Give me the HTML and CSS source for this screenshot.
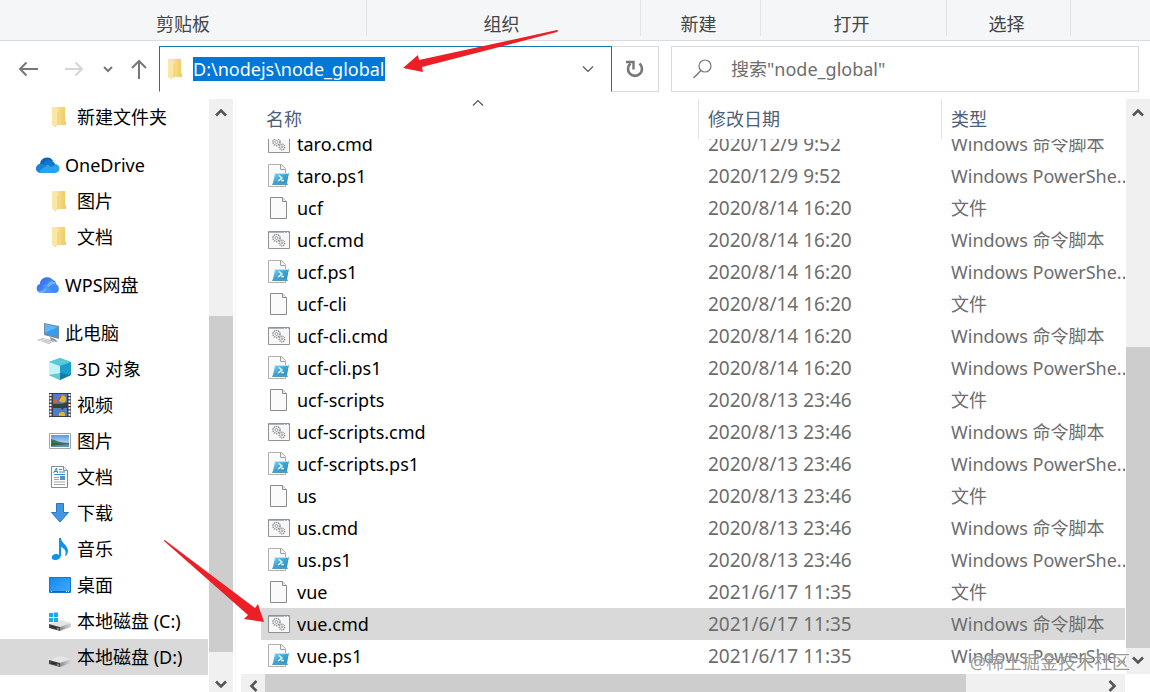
FILE: index.html
```html
<!DOCTYPE html>
<html lang="zh-CN">
<head>
<meta charset="utf-8">
<meta name="viewport" content="width=device-width, initial-scale=1">
<title>node_global</title>
<link rel="stylesheet" href="styles.css">
</head>
<body>
<svg class="defs" aria-hidden="true">
  <defs>
    <linearGradient id="g-folder"><stop offset="0" stop-color="#fbe49a"/><stop offset="1" stop-color="#eecb62"/></linearGradient>
    <linearGradient id="g-ps" x2="1" y2="1"><stop offset="0" stop-color="#8fdcf2"/><stop offset=".5" stop-color="#3aa6d4"/><stop offset="1" stop-color="#2b8fc4"/></linearGradient>
    <linearGradient id="g-desk" x2="1" y2="1"><stop offset="0" stop-color="#1488e8"/><stop offset="1" stop-color="#40acff"/></linearGradient>
    <linearGradient id="g-wps" x2="1" y2="1"><stop offset="0" stop-color="#2b62ee"/><stop offset="1" stop-color="#55a3fb"/></linearGradient>
    <linearGradient id="g-sky" x2="0" y2="1"><stop offset="0" stop-color="#5a9bdd"/><stop offset="1" stop-color="#e3f1fb"/></linearGradient>
    <linearGradient id="g-drive"><stop offset="0" stop-color="#888"/><stop offset=".5" stop-color="#b4b4b4"/><stop offset="1" stop-color="#d8d8d8"/></linearGradient>
    <symbol id="folder" viewBox="0 0 24 24"><path d="M7 2h10v14l1 1v3H7z" fill="url(#g-folder)"/><path d="M4 2h4l2 2v15l-3 3-3-2z" fill="#fae7a6"/><path d="M7 22l3-3V7" fill="none" stroke="#e3c266" stroke-width=".6"/></symbol>
    <symbol id="onedrive" viewBox="0 0 24 24"><path d="M4 11a7 7 0 0 1 13-3l-5 6-11 4a5 5 0 0 1 3-7z" fill="#0a64b8"/><path d="M4 11c4-1 8 3 12 4l-9 5H5a4.500 4.500 0 0 1-1-9z" fill="#1683d6"/><path d="M10 13c2-5 8-6 9-2 6 0 6 9 0 9H5l-2-2z" fill="#27a4ed"/><path d="M9 8c4-2 9 0 10 4l-4 2c-2-2-4-3-8-3z" fill="#0f77cd"/></symbol>
    <symbol id="wps" viewBox="0 0 24 24"><path d="M4 11c0-8 12-9 14-2l-4 11H5c-5 0-6-8-1-9z" fill="url(#g-wps)"/><path d="M10 12c2-3 3-5 6-5 3 0 4 2 4 4 4 2 4 9-1 9h-3z" fill="#3f8bf7"/><path d="M2 18c6 2 7-5 11-8 2-2 5-2 7 1-4-1-6 2-8 4-2 3-4 5-8 5z" fill="#74b2fd"/><path d="M9 11c3 1 5 7 9 9h-4c-3-2-4-5-7-7z" fill="#4d97fa"/></symbol>
    <symbol id="pc" viewBox="0 0 24 24"><path d="M8 2l15 3v13L8 14z" fill="#7d8996"/><path d="M9 3l13 3v10L9 13z" fill="#359bec"/><path d="M9 3l13 3-13 6z" fill="#5cb6f7"/><path d="M14 16l5 2 3 3-7-1z" fill="#9199a0"/><path d="M1 19l6-2 12 3-6 3z" fill="#b8bdc2"/><path d="M4 19l10 3M7 18l9 3M4 20l6-2" stroke="#fff" stroke-width=".5"/></symbol>
    <symbol id="cube" viewBox="0 0 24 24"><path d="M12 1l11 4v13l-11 5L1 18V5z" fill="#35b7ce"/><path d="M12 1L1 5l11 4 11-4z" fill="#55cbd9"/><path d="M1 5l11 4v8L1 18z" fill="#c4f3f5"/><path d="M23 5v13l-11-1V9z" fill="#1a9fca"/><path d="M1 18l11-2v7z" fill="#62cbd6"/><path d="M23 18l-11-2v7z" fill="#127d9e"/></symbol>
    <symbol id="video" viewBox="0 0 24 24"><path d="M1 0h22v24H1z" fill="#3d3d3d"/><path d="M2.500 1v22M21.500 1v22" stroke="#fff" stroke-width="2" stroke-dasharray="2 1.300"/><path d="M5 1h14v12H5zM5 15h14v8H5z" fill="#517cca"/><circle cx="14.500" cy="6" r="3.500" fill="#e3b529"/><path d="M14 2.500a4 4 0 0 0-3 5z" fill="#cf3525"/><circle cx="7.500" cy="8" r="2" fill="#dd5b3d"/><path d="M5 11c4-1 8 1 14-2v4H5zM12 13l5 1-3 3z" fill="#39452e"/><path d="M11 23a3 3 0 0 1 6-2v2z" fill="#e1b728"/></symbol>
    <symbol id="picture" viewBox="0 0 24 24"><path d="M1.500 4.500h21v15h-21z" fill="#fff" stroke="#a6a6a6"/><path d="M3 6h18v12H3z" fill="url(#g-sky)"/><path d="M3 10c5 1 8 4 18 4v1H3z" fill="#43745b"/><path d="M3 14h18v4H3z" fill="#5c93b3"/><path d="M3 14c6-1 8 1 18 0v1l-18 2z" fill="#356550"/></symbol>
    <symbol id="document" viewBox="0 0 24 24"><path d="M3.500 1.500h12l4 4v17h-16z" fill="#fff" stroke="#858b90"/><path d="M15.500 1.500v4h4" fill="#eee" stroke="#858b90"/><path d="M5.500 8l3-5 1 5M6 6.500h3" fill="none" stroke="#2688cf"/><path d="M11 4.500h3M11 7h6M6 9.500h11" stroke="#2d91d2"/><path d="M6 12.500h5M6 14.500h5M6 17h11M6 19.500h11" stroke="#9da4a9"/><path d="M12 11h5v4h-5z" fill="#5292c6"/></symbol>
    <symbol id="download" viewBox="0 0 24 24"><path d="M8.500 2.500h7v9h5L12 21l-8.500-9.500h5z" fill="#4496e2" stroke="#2878c3"/></symbol>
    <symbol id="music" viewBox="0 0 24 24"><path d="M11 1h2c0 5 7 7 7 13 0 3-2 5-3 5 2-5-1-8-4-9v8c0 3-3 5-6 5-5 0-4-6 1-6 1 0 2 0 3 1z" fill="#1094ea"/></symbol>
    <symbol id="desktop" viewBox="0 0 24 24"><path d="M1.500 4.500h21v15h-21z" fill="url(#g-desk)" stroke="#1777c8"/><path d="M2 18.500h20" stroke="#116ab9"/><path d="M3 18.500h1M18 18.500h1M20 18.500h1" stroke="#fff"/></symbol>
    <symbol id="drive" viewBox="0 0 24 24"><path d="M1 15l11-4 11 3-11 4z" fill="#e4e4e4"/><path d="M1 15l11 3v4L1 19z" fill="#454545"/><path d="M12 18l11-4v4l-11 4z" fill="url(#g-drive)"/><path d="M3 17.500l5 1.500" stroke="#222"/><path d="M9 20h2" stroke="#9fd49a"/></symbol>
    <symbol id="windrive" viewBox="0 0 24 24"><use href="#drive"/><path d="M1 4h4v4H1zM6 3.500h4V8H6zM1 9h4v4H1zM6 9h4v4H6z" fill="#15aee5"/></symbol>
    <symbol id="file" viewBox="0 0 24 24"><path d="M3.500 1.500h12l4 4v17h-16z" fill="#fafafa" stroke="#8b8b8b"/><path d="M15.500 1.500v4h4" fill="#eee" stroke="#8b8b8b"/></symbol>
    <symbol id="cmd" viewBox="0 0 24 24"><path d="M1.500 3.500h21v17h-21z" fill="#f8f8f8" stroke="#919191"/><path d="M2 4.500h20" stroke="#aeb5bb"/><path d="M17 4.500h1M20 4.500h1" stroke="#fff"/><g fill="none" stroke="#8f9498"><circle cx="9.500" cy="10" r="3.500" stroke-width="1.600" stroke-dasharray="1.400 .8"/><circle cx="9.500" cy="10" r="1.500" stroke-width=".8"/><circle cx="15" cy="15" r="2.800" stroke-width="1.400" stroke-dasharray="1.200 .7"/><circle cx="15" cy="15" r="1" stroke-width=".8"/></g></symbol>
    <symbol id="ps1" viewBox="0 0 24 24"><path d="M1.500 .5h13l4 4v18h-17z" fill="#fafafa" stroke="#b1b1b1"/><path d="M13.500 .5v5h5" fill="#eee" stroke="#a2a2a2"/><path d="M8 9h14l-2 10H6z" fill="url(#g-ps)"/><path d="M8 9.500h13.500" stroke="#b9e4f2"/><path d="M6 19h14l1 2H5z" fill="#5d96b1"/><path d="M12 11.500l3 2.500-4 3M14 16.500h3" fill="none" stroke="#fff" stroke-width="1.300"/></symbol>
    <symbol id="chevron" viewBox="0 0 24 24"><path d="M7 15.500l5-5 5 5" fill="none" stroke="#555" stroke-width="2.600"/></symbol>
    <symbol id="thin-chevron" viewBox="0 0 24 24"><path d="M7 14.500l5-5 5 5" fill="none" stroke="#555" stroke-width="1.200"/></symbol>
  </defs>
</svg>
<div class="window">
  <div class="ribbon">
    <div class="group clipboard">剪贴板</div>
    <div class="group organize">组织</div>
    <div class="group create">新建</div>
    <div class="group open">打开</div>
    <div class="group choose">选择</div>
  </div>
  <div class="toolbar">
    <nav class="history" aria-label="导航">
      <button class="nav back" aria-label="后退"><svg viewBox="0 0 24 24"><path d="M22 12H4M10.500 5.500L4 12l6.500 6.500" fill="none" stroke="#777" stroke-width="2"/></svg></button>
      <button class="nav forward" aria-label="前进"><svg viewBox="0 0 24 24"><path d="M3 12h17M13.500 5.500L20 12l-6.500 6.500" fill="none" stroke="#d5d5d5" stroke-width="2"/></svg></button>
      <button class="nav recent" aria-label="最近"><svg viewBox="0 0 24 24"><path d="M8 10l4 4 4-4" fill="none" stroke="#777" stroke-width="2"/></svg></button>
      <button class="nav up" aria-label="上移"><svg viewBox="0 0 24 24"><path d="M12 22V4M5 11l7-7 7 7" fill="none" stroke="#777" stroke-width="2"/></svg></button>
    </nav>
    <div class="address">
      <svg class="icon"><use href="#folder"/></svg>
      <input class="path" aria-label="地址" value="D:\nodejs\node_global">
      <button class="drop" aria-label="展开"><svg class="icon down"><use href="#thin-chevron"/></svg></button>
    </div>
    <button class="refresh" aria-label="刷新"><svg viewBox="0 0 24 24"><path d="M16.500 6.500a7 7 0 1 1-9 0" fill="none" stroke="#777" stroke-width="2.600"/><path d="M3 5h7.500v7.500" fill="none" stroke="#777" stroke-width="2.400"/></svg></button>
    <div class="search">
      <svg class="icon" viewBox="0 0 24 24"><circle cx="15" cy="9" r="6" fill="none" stroke="#777" stroke-width="1.200"/><path d="M11 13.500L3.500 21" stroke="#777" stroke-width="1.500"/></svg>
      <input class="query" aria-label="搜索" placeholder='搜索"node_global"'>
    </div>
  </div>
  <div class="main">
    <nav class="tree" aria-label="文件夹">
      <a class="node child" href="#"><svg class="icon"><use href="#folder"/></svg>新建文件夹</a>
      <a class="node root" href="#"><svg class="icon"><use href="#onedrive"/></svg>OneDrive</a>
      <a class="node child" href="#"><svg class="icon"><use href="#folder"/></svg>图片</a>
      <a class="node child" href="#"><svg class="icon"><use href="#folder"/></svg>文档</a>
      <a class="node root" href="#"><svg class="icon"><use href="#wps"/></svg>WPS网盘</a>
      <a class="node root" href="#"><svg class="icon"><use href="#pc"/></svg>此电脑</a>
      <a class="node child" href="#"><svg class="icon"><use href="#cube"/></svg>3D 对象</a>
      <a class="node child" href="#"><svg class="icon"><use href="#video"/></svg>视频</a>
      <a class="node child" href="#"><svg class="icon"><use href="#picture"/></svg>图片</a>
      <a class="node child" href="#"><svg class="icon"><use href="#document"/></svg>文档</a>
      <a class="node child" href="#"><svg class="icon"><use href="#download"/></svg>下载</a>
      <a class="node child" href="#"><svg class="icon"><use href="#music"/></svg>音乐</a>
      <a class="node child" href="#"><svg class="icon"><use href="#desktop"/></svg>桌面</a>
      <a class="node child" href="#"><svg class="icon"><use href="#windrive"/></svg>本地磁盘 (C:)</a>
      <a class="node child current" href="#"><svg class="icon"><use href="#drive"/></svg>本地磁盘 (D:)</a>
    </nav>
    <div class="scrollbar tree-scroll">
      <button class="step" aria-label="向上"><svg class="icon"><use href="#chevron"/></svg></button>
      <div class="before"></div><div class="thumb"></div><div class="after"></div>
      <button class="step" aria-label="向下"><svg class="icon down"><use href="#chevron"/></svg></button>
    </div>
    <div class="pane">
      <div class="upper">
        <table class="files">
          <thead><tr><th>名称<svg class="icon sort"><use href="#thin-chevron"/></svg></th><th>修改日期</th><th>类型</th></tr></thead>
          <tbody>
            <tr><td><svg class="icon"><use href="#cmd"/></svg>taro.cmd</td><td>2020/12/9 9:52</td><td>Windows 命令脚本</td></tr>
            <tr><td><svg class="icon"><use href="#ps1"/></svg>taro.ps1</td><td>2020/12/9 9:52</td><td>Windows PowerShe..</td></tr>
            <tr><td><svg class="icon"><use href="#file"/></svg>ucf</td><td>2020/8/14 16:20</td><td>文件</td></tr>
            <tr><td><svg class="icon"><use href="#cmd"/></svg>ucf.cmd</td><td>2020/8/14 16:20</td><td>Windows 命令脚本</td></tr>
            <tr><td><svg class="icon"><use href="#ps1"/></svg>ucf.ps1</td><td>2020/8/14 16:20</td><td>Windows PowerShe..</td></tr>
            <tr><td><svg class="icon"><use href="#file"/></svg>ucf-cli</td><td>2020/8/14 16:20</td><td>文件</td></tr>
            <tr><td><svg class="icon"><use href="#cmd"/></svg>ucf-cli.cmd</td><td>2020/8/14 16:20</td><td>Windows 命令脚本</td></tr>
            <tr><td><svg class="icon"><use href="#ps1"/></svg>ucf-cli.ps1</td><td>2020/8/14 16:20</td><td>Windows PowerShe..</td></tr>
            <tr><td><svg class="icon"><use href="#file"/></svg>ucf-scripts</td><td>2020/8/13 23:46</td><td>文件</td></tr>
            <tr><td><svg class="icon"><use href="#cmd"/></svg>ucf-scripts.cmd</td><td>2020/8/13 23:46</td><td>Windows 命令脚本</td></tr>
            <tr><td><svg class="icon"><use href="#ps1"/></svg>ucf-scripts.ps1</td><td>2020/8/13 23:46</td><td>Windows PowerShe..</td></tr>
            <tr><td><svg class="icon"><use href="#file"/></svg>us</td><td>2020/8/13 23:46</td><td>文件</td></tr>
            <tr><td><svg class="icon"><use href="#cmd"/></svg>us.cmd</td><td>2020/8/13 23:46</td><td>Windows 命令脚本</td></tr>
            <tr><td><svg class="icon"><use href="#ps1"/></svg>us.ps1</td><td>2020/8/13 23:46</td><td>Windows PowerShe..</td></tr>
            <tr><td><svg class="icon"><use href="#file"/></svg>vue</td><td>2021/6/17 11:35</td><td>文件</td></tr>
            <tr class="selected"><td><svg class="icon"><use href="#cmd"/></svg>vue.cmd</td><td>2021/6/17 11:35</td><td>Windows 命令脚本</td></tr>
            <tr><td><svg class="icon"><use href="#ps1"/></svg>vue.ps1</td><td>2021/6/17 11:35</td><td>Windows PowerShe..</td></tr>
          </tbody>
        </table>
        <div class="scrollbar list-scroll">
          <button class="step" aria-label="向上"><svg class="icon"><use href="#chevron"/></svg></button>
          <div class="before"></div><div class="thumb"></div>
          <button class="step" aria-label="向下"><svg class="icon down"><use href="#chevron"/></svg></button>
        </div>
      </div>
      <div class="scrollbar wide-scroll">
        <button class="step" aria-label="向左"><svg class="icon left"><use href="#chevron"/></svg></button>
        <div class="thumb"></div><div class="after"></div>
        <button class="step" aria-label="向右"><svg class="icon right"><use href="#chevron"/></svg></button>
      </div>
    </div>
  </div>
  <svg class="marks" aria-hidden="true">
    <path d="M557 30q2 0 0 2L422 67l1 5-20-4 15-13 1 5z" fill="#ec1f26"/>
    <path d="M164 541q0-2 2 0l89 67 3-4 6 18-20-3 4-4z" fill="#ec1f26"/>
  </svg>
  <div class="watermark">@稀土掘金技术社区</div>
</div>
</body>
</html>
```

FILE: styles.css
```css
* { box-sizing: border-box; }

body {
  margin: 0;
  font-family: "Noto Sans", "Noto Sans CJK SC", sans-serif;
  font-size: 18px;
  line-height: 24px;
  color: #000;
  background: #fff;
}

button {
  margin: 0;
  padding: 0;
  border: 0;
  background: none;
  display: flex;
  align-items: center;
  justify-content: center;
}

input {
  padding: 0;
  border: 0;
  outline: 0;
  font: inherit;
  background: none;
}

.defs { position: absolute; width: 0; height: 0; }
.icon { width: 24px; height: 24px; flex: none; }
.down { transform: rotate(180deg); }
.left { transform: rotate(-90deg); }
.right { transform: rotate(90deg); }

.window {
  position: relative;
  display: flex;
  flex-direction: column;
  height: 100vh;
  overflow: hidden;
}

.ribbon {
  display: flex;
  flex: none;
  height: 41px;
  padding-bottom: 4px;
  border-bottom: 1px solid #d9dbdd;
  background: #f4f6f8;
  color: #444;
}
.group {
  padding: 12px 4px 0 0;
  border-right: 1px solid #e1e3e5;
  text-align: center;
}
.clipboard { width: 367px; padding-right: 0; }
.organize { width: 274px; }
.create { width: 120px; }
.open { width: 186px; }
.choose { width: 124px; }

.toolbar {
  display: flex;
  flex: none;
  padding: 5px 11px 7px 0;
}
.history {
  display: flex;
  align-items: center;
  width: 159px;
  padding-left: 16px;
}
.nav svg { width: 24px; height: 24px; }
.forward { margin-left: 22px; }
.recent { margin-left: 10px; }
.up { margin-left: 7px; }

.address {
  display: flex;
  align-items: center;
  flex: 447 1 0;
  height: 46px;
  padding-left: 4px;
  border: 1px solid #1477b5;
  border-bottom-color: transparent;
}
.path {
  field-sizing: content;
  height: 24px;
  margin-left: 5px;
  background: #0078d7;
  color: #fff;
}
.drop { margin-left: auto; margin-right: 11px; }
.refresh {
  width: 47px;
  height: 46px;
  border: 1px solid #d9d9d9;
  border-left: 0;
}
.refresh svg { width: 24px; height: 24px; }
.search {
  display: flex;
  align-items: center;
  flex: 448 1 0;
  height: 46px;
  margin-left: 12px;
  padding-left: 18px;
  border: 1px solid #d9d9d9;
}
.query { flex: 1; min-width: 0; margin-left: 17px; }
.query::placeholder { color: #6d6d6d; }

.main {
  display: flex;
  flex: 1;
  min-height: 0;
  margin-bottom: -6px;
}

.tree { flex: none; width: 209px; padding-right: 1px; }
.node {
  display: flex;
  align-items: center;
  height: 36px;
  color: #000;
  text-decoration: none;
}
.child { padding-left: 48px; gap: 5px; }
.root { margin-top: 12px; padding-left: 36px; gap: 5px; }
.current { background: #d9d9d9; }

.scrollbar { display: flex; flex: none; background: #f0f0f0; }
.step { flex: none; width: 24px; height: 24px; }
.thumb { background: #cdcdcd; }
.tree-scroll { flex-direction: column; width: 24px; }
.tree-scroll .step { height: 26px; }
.tree-scroll .before { flex: 191; }
.tree-scroll .thumb { flex: 336; }
.tree-scroll .after { flex: 20; }
.list-scroll { flex-direction: column; width: 24px; margin-left: 1px; }
.list-scroll .step { height: 26px; }
.list-scroll .before { flex: 222; }
.list-scroll .thumb { flex: 300; }
.wide-scroll { margin-right: 25px; }
.wide-scroll .thumb { flex: 699; }
.wide-scroll .after { flex: 135; }

.pane {
  display: flex;
  flex-direction: column;
  flex: 1;
  min-width: 0;
  margin-left: 2px;
  padding-left: 5px;
  border-left: 1px solid #f5f5f5;
}
.upper { display: flex; flex: 1; min-height: 0; }

.files {
  display: flex;
  flex-direction: column;
  flex: 1;
  min-width: 0;
  padding: 0 0 2px 20px;
}
.files thead { display: block; flex: none; }
.files tbody {
  display: flex;
  flex-direction: column;
  justify-content: flex-end;
  flex: 1;
  min-height: 0;
  overflow: hidden;
}
.files tr {
  display: grid;
  flex: none;
  grid-template-columns: minmax(0, 1fr) 243px 184px;
}
.files th {
  position: relative;
  height: 40px;
  padding: 8px 0 0 9px;
  border-left: 1px solid #e2e2e2;
  font-weight: 400;
  text-align: left;
  color: #4c607a;
}
.files th:first-child { padding-left: 5px; border-left: 0; }
.sort { position: absolute; top: -8px; left: calc(50% - 14px); }
.files td {
  height: 32px;
  padding: 4px 0 4px 10px;
  white-space: nowrap;
  color: #6d6d6d;
}
.files td:nth-child(2) { font-size: 19px; }
.files td:first-child {
  display: flex;
  align-items: center;
  gap: 6px;
  padding-left: 6px;
  color: #000;
}
.selected { background: #d9d9d9; }

.marks {
  position: absolute;
  inset: 0;
  width: 100%;
  height: 100%;
  pointer-events: none;
}
.watermark {
  position: absolute;
  right: 20px;
  bottom: 18px;
  color: rgba(110, 110, 110, .7);
  text-shadow: 0 0 2px #fff;
}
```
